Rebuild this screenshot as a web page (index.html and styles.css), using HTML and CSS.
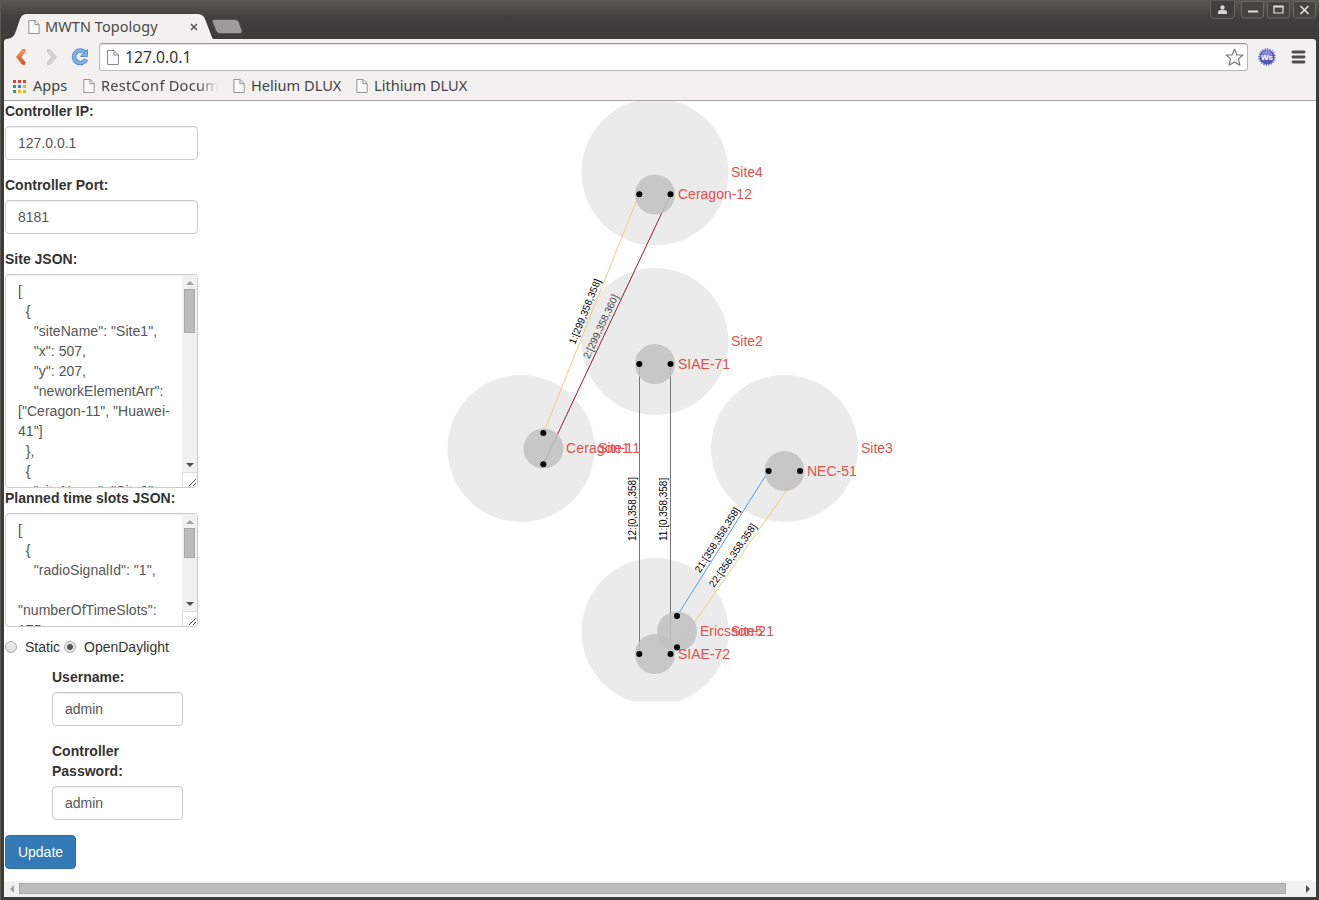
FILE: index.html
```html
<!DOCTYPE html>
<html lang="en">
<head>
<meta charset="utf-8">
<title>MWTN Topology</title>
<link rel="stylesheet" href="styles.css">
</head>
<body>
<svg class="defs" width="0" height="0" aria-hidden="true">
  <symbol id="page" viewBox="0 0 12 15"><path d="M.5.5H7L11.5 5V14.500H.5Z" fill="#fafafa" stroke="#8b8b8b"/><path d="M7 .5V5H11.500" fill="none" stroke="#8b8b8b"/></symbol>
</svg>
<div class="window">
  <header class="titlebar">
    <div class="tab">
      <svg class="tab-shape" width="206" height="25" viewBox="0 0 206 25"><path d="M0 25C6 24 7 22 9 17L13 5Q15 0 20 0H190Q196 0 198 5L203 18Q205 24 206 25Z" fill="#f2f1f0"/></svg>
      <div class="tab-content">
        <svg width="12" height="14"><use href="#page"/></svg>
        <span class="tab-title">MWTN Topology</span>
        <svg width="8" height="8" viewBox="0 0 8 8"><path d="M1 1L7 7M7 1L1 7" stroke="#555" stroke-width="1.500"/></svg>
      </div>
    </div>
    <svg class="new-tab" width="32" height="15" viewBox="0 0 32 15"><path d="M3 .5H24Q27 .5 28 3L31 12Q31.500 14.500 29 14.500H9Q6 14.500 5 12L1.500 3Q.5 .5 3 .5Z" fill="#9d9c9a" stroke="#55534f"/></svg>
    <div class="controls">
      <svg class="user" width="25" height="19" viewBox="0 0 25 19"><path d="M.5 0V14Q.5 17.500 4 17.500H21Q24.500 17.500 24.500 14V0" fill="#403f3b" stroke="#65645e"/><path d="M8 13V11Q8 9 10.500 9H14.500Q17 9 17 11V13Z" fill="#d5d3cf"/><circle cx="12.500" cy="6.500" r="2.200" fill="#d5d3cf"/></svg>
      <svg width="23" height="18" viewBox="0 0 23 18"><rect x=".5" y=".5" width="22" height="16.500" rx="2" fill="#45443f" stroke="#6b6a64"/><path d="M7 10.500H17" stroke="#e4e2de" stroke-width="2"/></svg>
      <svg width="23" height="18" viewBox="0 0 23 18"><rect x=".5" y=".5" width="22" height="16.500" rx="2" fill="#45443f" stroke="#6b6a64"/><path d="M7 5.500H16V12H7Z" fill="none" stroke="#e4e2de" stroke-width="1.200"/><path d="M6.500 5.500H16.500" stroke="#e4e2de" stroke-width="2"/></svg>
      <svg width="23" height="18" viewBox="0 0 23 18"><rect x=".5" y=".5" width="22" height="16.500" rx="2" fill="#45443f" stroke="#6b6a64"/><path d="M7.500 5L15.500 13M15.500 5L7.500 13" stroke="#e4e2de" stroke-width="1.600"/></svg>
    </div>
  </header>
  <div class="chrome">
    <div class="toolbar">
      <svg width="94" height="32" viewBox="0 0 94 32">
        <defs><linearGradient id="og" x2="0" y2="1"><stop stop-color="#f2a169"/><stop offset="1" stop-color="#d84b16"/></linearGradient></defs>
        <path d="M18.500 10.500H21V13L16.800 18L21 23V25.500H18.500L12.500 18Z" fill="url(#og)" stroke="#dc6a38" stroke-width=".8" stroke-linejoin="round"/>
        <path d="M43.500 10.500V13L47.800 18L43.500 23V25.500H46L52.500 18L46 10.500Z" fill="#d3d2d0" stroke="#c9c8c6" stroke-width=".8" stroke-linejoin="round"/>
        <path d="M81 13.500A6.300 6.300 0 1 0 82 20.500" fill="none" stroke="#4f83bd" stroke-width="4.600"/>
        <path d="M81 13.500A6.300 6.300 0 1 0 82 20.500" fill="none" stroke="#7fb1e6" stroke-width="3"/>
        <path d="M83.500 10.500V17.500H76.500Z" fill="#7fb1e6" stroke="#4f83bd" stroke-width=".8"/>
      </svg>
      <div class="address">
        <svg width="12" height="15"><use href="#page"/></svg>
        <span class="url">127.0.0.1</span>
        <svg width="19" height="19" viewBox="0 0 19 19"><path d="M9.500 1.200L11.900 7H17.900L13.400 10.900L14.900 17.200L9.500 13.900L4.100 17.200L5.600 10.900L1.100 7H7.100Z" fill="#fff" stroke="#777" stroke-width="1.200" stroke-linejoin="round"/></svg>
      </div>
      <svg class="ext" width="18" height="18" viewBox="0 0 18 18"><circle cx="9" cy="9" r="7.500" fill="#5558b5"/><circle cx="9" cy="9" r="8" fill="none" stroke="#5c5fb8" stroke-width="1.500" stroke-dasharray="1.200 1.300"/><circle cx="9" cy="7" r="5" fill="#8588d2"/><text x="9" y="12.200" text-anchor="middle" class="ext-label">Ws</text></svg>
      <svg class="menu" width="15" height="14" viewBox="0 0 15 14"><path d="M2 2H13M2 7H13M2 12H13" stroke="#4d4d4d" stroke-width="2.800" stroke-linecap="round"/></svg>
    </div>
    <nav class="bookmarks">
      <svg width="13" height="13" viewBox="0 0 13 13"><path d="M0 0H3V3H0ZM5 0H8V3H5ZM10 0H13V3H10Z" fill="#d6453d"/><path d="M0 5H3V8H0ZM0 10H3V13H0Z" fill="#33a05b"/><path d="M5 5H8V8H5Z" fill="#3b7de0"/><path d="M10 5H13V8H10ZM5 10H8V13H5ZM10 10H13V13H10Z" fill="#e6b52e"/></svg>
      <span class="bm apps">Apps</span>
      <svg width="12" height="14"><use href="#page"/></svg>
      <span class="bm rest">RestConf Docum</span>
      <svg width="12" height="14"><use href="#page"/></svg>
      <span class="bm helium">Helium DLUX</span>
      <svg width="12" height="14"><use href="#page"/></svg>
      <span class="bm">Lithium DLUX</span>
    </nav>
  </div>
  <main class="page">
    <form class="settings">
      <label>Controller IP:</label>
      <div class="control">127.0.0.1</div>
      <label>Controller Port:</label>
      <div class="control">8181</div>
      <label>Site JSON:</label>
      <div class="area sites">
        <div class="area-text">[
  {
    "siteName": "Site1",
    "x": 507,
    "y": 207,
    "neworkElementArr":
["Ceragon-11", "Huawei-
41"]
  },
  {
    "siteName": "Site2",</div>
        <div class="scroll"><i class="up"></i><i class="thumb"></i><i class="down"></i><svg class="grip" width="15" height="15" viewBox="0 0 15 15"><path d="M0 .5H15M.5 0V15" stroke="#ddd"/><path d="M7 14L14 7M11 14L14 11" stroke="#555"/></svg></div>
      </div>
      <label>Planned time slots JSON:</label>
      <div class="area slots">
        <div class="area-text">[
  {
    "radioSignalId": "1",

"numberOfTimeSlots":
175,</div>
        <div class="scroll"><i class="up"></i><i class="thumb"></i><i class="down"></i><svg class="grip" width="15" height="15" viewBox="0 0 15 15"><path d="M0 .5H15M.5 0V15" stroke="#ddd"/><path d="M7 14L14 7M11 14L14 11" stroke="#555"/></svg></div>
      </div>
      <div class="radios"><i class="radio"></i><span class="static">Static</span><i class="radio on"></i><span>OpenDaylight</span></div>
      <div class="login">
        <label>Username:</label>
        <div class="control">admin</div>
        <label>Controller Password:</label>
        <div class="control">admin</div>
      </div>
      <button class="update" type="button">Update</button>
    </form>
    <svg class="topology" width="1111" height="600" viewBox="205 101 1111 600">
      <g fill="#ebebeb">
        <circle cx="655" cy="172" r="73.500"/><circle cx="655" cy="341.500" r="73.500"/><circle cx="521" cy="448.500" r="73.500"/><circle cx="784.500" cy="448.500" r="73.500"/><circle cx="655" cy="631.500" r="73.500"/>
      </g>
      <g fill="none">
        <path d="M639 194.500L543.500 433" stroke="#f0cd78"/>
        <path d="M670.500 194.500L543.500 464" stroke="#92202d"/>
        <path d="M639.500 364V654M670.500 364V654" stroke="#777"/>
        <path d="M768.500 471L677 616" stroke="#589be8"/>
        <path d="M800 471L677 647" stroke="#efcc7e"/>
      </g>
      <g fill="#c2c2c2" fill-opacity=".88">
        <circle cx="655" cy="194.500" r="20"/><circle cx="655" cy="364" r="20"/><circle cx="543.500" cy="448.500" r="20"/><circle cx="784.500" cy="471" r="20"/><circle cx="677" cy="631.500" r="20"/><circle cx="655" cy="654" r="20"/>
      </g>
      <g>
        <circle cx="639.300" cy="194.300" r="3"/><circle cx="670.500" cy="194.300" r="3"/><circle cx="639.300" cy="364" r="3"/><circle cx="670.500" cy="364" r="3"/><circle cx="543.300" cy="433" r="3"/><circle cx="543.300" cy="464.300" r="3"/><circle cx="768.600" cy="471" r="3"/><circle cx="800" cy="471" r="3"/><circle cx="677" cy="616" r="3"/><circle cx="677" cy="647.300" r="3"/><circle cx="639.300" cy="654" r="3"/><circle cx="670.500" cy="654" r="3"/>
      </g>
      <g class="names">
        <text x="731" y="177">Site4</text><text x="678" y="199">Ceragon-12</text>
        <text x="731" y="346">Site2</text><text x="678" y="369">SIAE-71</text>
        <text x="566" y="453" textLength="74">Ceragon-11</text><text x="598" y="453">Site1</text>
        <text x="861" y="453">Site3</text><text x="807" y="476">NEC-51</text>
        <text x="700" y="636">Ericsson-21</text><text x="731" y="636">Site5</text>
        <text x="678" y="659">SIAE-72</text>
      </g>
      <g class="links">
        <text transform="translate(575 345) rotate(-68)">1:[299,358,358]</text>
        <text class="dim" transform="translate(589 359.500) rotate(-64.800)">2:[299,358,360]</text>
        <text transform="translate(636 541) rotate(-90)">12:[0,358,358]</text>
        <text transform="translate(667 541) rotate(-90)">11:[0,358,358]</text>
        <text transform="translate(700 573.500) rotate(-57.700)">21:[358,358,358]</text>
        <text transform="translate(714 588) rotate(-55)">22:[356,358,358]</text>
      </g>
    </svg>
  </main>
  <div class="hscroll"><i class="left"></i><i class="hthumb"></i><i class="right"></i></div>
</div>
</body>
</html>
```
FILE: styles.css
```css
* { box-sizing: border-box; }
body { margin: 0; font: 14px/20px "Liberation Sans", Arial, sans-serif; color: #333; }
.defs { position: absolute; }
svg { flex: none; display: block; }
.window { width: 1319px; height: 900px; display: flex; flex-direction: column; padding: 0 3px 3px; background: #3c3b37; border-left: 1px solid #5b5954; overflow: hidden; }
.titlebar { height: 39px; margin: 0 -3px; padding-left: 6px; display: flex; background: linear-gradient(#595852, #403f3b 45%, #3c3b37); flex: none; }
.tab { width: 206px; margin-top: 14px; height: 25px; display: grid; }
.tab-shape, .tab-content { grid-area: 1 / 1; }
.tab-content { display: flex; align-items: center; padding-left: 21px; z-index: 1; }
.tab-title { font: 14.500px/20px "Noto Sans", sans-serif; letter-spacing: .06px; color: #4a4a4a; margin: -2px 0 0 5px; width: 145px; white-space: nowrap; }
.new-tab { margin: 19px 0 0 -2px; }
.controls { display: flex; margin-left: auto; padding: 1px 3px 0 0; gap: 3px; }
.user { margin-right: 3px; }
.chrome { height: 62px; background: #f2f1f0; border-bottom: 1px solid #a9a5a5; flex: none; border-radius: 3px 3px 0 0; }
.toolbar { height: 33px; display: flex; align-items: flex-start; }
.address { width: 1149px; height: 28px; margin: 4px 0 0 1px; border: 1px solid #bbb9b7; border-top-color: #9f9d9b; border-radius: 3px; background: #fff; display: flex; align-items: center; padding: 0 3px 0 7px; box-shadow: inset 0 1px 1px #ddd; }
.url { flex: 1; font: 15.700px/20px "Noto Sans", sans-serif; color: #333; margin: -1px 0 0 6px; }
.ext { margin: 9px 0 0 10px; }
.ext-label { font: bold 8px "Liberation Sans", sans-serif; fill: #fff; }
.menu { margin: 11px 0 0 15px; }
.bookmarks { height: 28px; display: flex; align-items: center; padding-left: 9px; font: 14.600px/20px "Noto Sans", sans-serif; color: #444; white-space: nowrap; }
.bm { margin: -2px 0 0 6px; }
.apps { width: 44px; margin-left: 7px; margin-right: 6px; }
.rest { width: 117px; overflow: hidden; margin-right: 15px; letter-spacing: .25px; -webkit-mask-image: linear-gradient(90deg, #000 83%, transparent); mask-image: linear-gradient(90deg, #000 83%, transparent); }
.helium { width: 91px; margin-right: 14px; }
.page { height: 780px; background: #fff; display: flex; padding-left: 1px; flex: none; }
.settings { width: 193px; margin-right: 7px; }
label { display: block; font-weight: bold; margin-bottom: 5px; }
.control, .area { border: 1px solid #ccc; border-radius: 4px; background: #fff; color: #555; box-shadow: inset 0 1px 1px rgba(0,0,0,.075); }
.control { height: 34px; padding: 6px 12px; margin-bottom: 15px; }
.area { display: flex; overflow: hidden; }
.area-text { width: 176px; padding: 6px 0 0 12px; white-space: pre; overflow: hidden; letter-spacing: .04px; }
.sites { height: 214px; }
.slots { height: 114px; margin-bottom: 10px; }
.scroll { width: 15px; background: #f1f1f1; display: flex; flex-direction: column; align-items: center; flex: none; }
.up { border: 4px solid transparent; border-top: 0; border-bottom-color: #a3a3a3; margin: 6px 0 4px; }
.thumb { width: 11px; height: 44px; background: #bcbcbc; border: 1px solid #a8a8a8; }
.slots .thumb { height: 30px; }
.down { border: 4px solid transparent; border-bottom: 0; border-top-color: #505050; margin: auto 0 5px; }
.grip { background: #fff; }
.radios { display: flex; align-items: center; height: 20px; margin-bottom: 10px; }
.radio { width: 12px; height: 12px; border: 1px solid #aaa; border-radius: 50%; background: linear-gradient(#eee, #ddd); margin-right: 8px; }
.static { margin-right: 4px; }
.on { background: radial-gradient(circle, #555 0 2.500px, #e6e6e6 3.500px); }
.login { width: 131px; margin-left: 47px; }
.update { display: block; width: 71px; height: 34px; border: 1px solid #2e6da4; border-radius: 4px; padding: 0; background: #337ab7; color: #fff; font: inherit; }
.names { font-size: 14px; fill: #e0524c; }
.links { font-size: 10px; fill: #000; }
.dim { fill: #444; }
.hscroll { height: 16px; background: #f1f1f1; display: flex; align-items: center; flex: none; padding-bottom: 1px; }
.left { border: 4px solid transparent; border-left: 0; border-right-color: #a3a3a3; margin: 0 5px 0 6px; }
.hthumb { width: 1267px; height: 11px; background: #bcbcbc; border: 1px solid #a8a8a8; }
.right { border: 4px solid transparent; border-right: 0; border-left-color: #505050; margin-left: 20px; }
```
